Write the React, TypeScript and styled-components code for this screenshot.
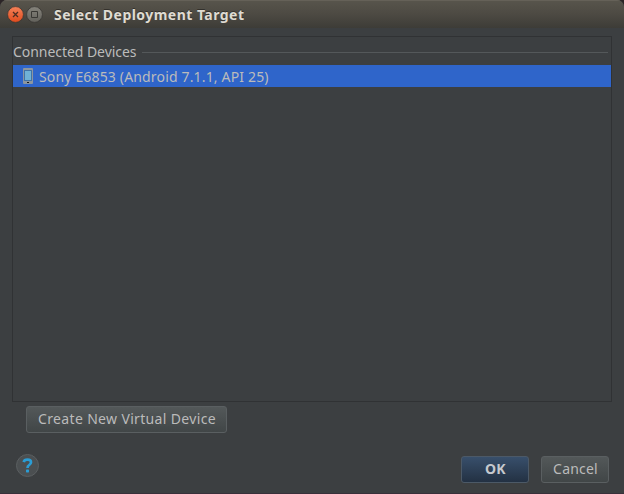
import React from "react";
import styled, { createGlobalStyle } from "styled-components";

const GlobalStyle = createGlobalStyle`
  * { box-sizing: border-box; }
  body { margin: 0; background: #2b2426; overflow: hidden; }
`;

const Dialog = styled.div`
  width: 624px;
  height: 494px;
  display: flex;
  flex-direction: column;
  overflow: hidden;
  border-radius: 7px 7px 0 0;
  border-bottom: 1px solid #38303a;
  background: #3c3f41;
  color: #bbbbbb;
  font-family: "Noto Sans", "Open Sans", sans-serif;
  font-size: 14px;
`;

const TitleBar = styled.header`
  flex: none;
  height: 28px;
  display: flex;
  align-items: center;
  padding: 1px 0 0 7px;
  background: linear-gradient(#58554c, #4d4a43 50%, #3d3c37);
  box-shadow: inset 0 1px #656158;
`;

const WindowButton = styled.span`
  display: flex;
  width: 17px;
  height: 17px;
  margin-right: 2px;
`;

const Label = styled.span<{ $spacing?: number }>`
  letter-spacing: ${(p) => p.$spacing ?? 0}px;
  line-height: 20px;
  white-space: nowrap;
`;

const Title = styled(Label)`
  margin-left: 9px;
  font-weight: 700;
  color: #dfdbd2;
  text-shadow: 0 -1px #33312c;
`;

const Body = styled.main`
  flex: 1;
  display: flex;
  flex-direction: column;
  padding: 8px 12px 0;
`;

const DeviceList = styled.section`
  height: 366px;
  border: 1px solid #303234;
`;

const GroupHeader = styled.div`
  height: 28px;
  display: flex;
  align-items: center;
  padding: 2px 3px 0 0;
`;

const Rule = styled.span`
  flex: 1;
  height: 1px;
  margin-left: 6px;
  background: #54585a;
`;

const DeviceRow = styled.div`
  height: 22px;
  display: flex;
  align-items: center;
  padding-left: 9px;
  gap: 5px;
  background: #2f65ca;
`;

const DeviceName = styled(Label)`
  padding-top: 2px;
`;

const Button = styled.button<{ $width: number; $primary?: boolean }>`
  width: ${(p) => p.$width}px;
  height: 27px;
  display: flex;
  align-items: center;
  justify-content: center;
  padding: 0 0 2px 1px;
  border: 1px solid ${(p) => (p.$primary ? "#4c5967" : "#5a5f61")};
  border-radius: 3px;
  background: ${(p) =>
    p.$primary ? "linear-gradient(#384f6b, #233143)" : "linear-gradient(#535859, #414647)"};
  color: ${(p) => (p.$primary ? "#c5c9ce" : "#bbbbbb")};
  font: ${(p) => (p.$primary ? 700 : 400)} 14px "Noto Sans", "Open Sans", sans-serif;
`;

const ListActions = styled.div`
  display: flex;
  padding: 4px 0 0 14px;
`;

const Footer = styled.footer`
  display: flex;
  align-items: center;
  gap: 12px;
  padding: 21px 3px 0 4px;
`;

const HelpButton = styled.span`
  display: flex;
  width: 24px;
  height: 24px;
  margin: 0 auto 7px 0;
`;

function CloseIcon() {
  return (
    <svg width="17" height="17" viewBox="0 0 17 17">
      <defs>
        <linearGradient id="close" x2="0" y2="1">
          <stop stopColor="#f58259" />
          <stop offset="1" stopColor="#df4b1d" />
        </linearGradient>
      </defs>
      <circle cx="8.5" cy="8.5" r="7.9" fill="url(#close)" stroke="#353430" strokeWidth=".7" />
      <path d="M6 6l5 5M11 6l-5 5" stroke="#4d2d22" strokeWidth="1.3" />
    </svg>
  );
}

function MaximizeIcon() {
  return (
    <svg width="17" height="17" viewBox="0 0 17 17">
      <defs>
        <linearGradient id="maximize" x2="0" y2="1">
          <stop stopColor="#86847c" />
          <stop offset="1" stopColor="#62615b" />
        </linearGradient>
      </defs>
      <circle cx="8.5" cy="8.5" r="7.9" fill="url(#maximize)" stroke="#353430" strokeWidth=".7" />
      <path d="M5.5 5.5h6v6h-6z" fill="none" stroke="#393834" />
    </svg>
  );
}

function PhoneIcon() {
  return (
    <svg width="12" height="16" viewBox="0 0 12 16">
      <rect x="1" width="10" height="16" rx="1" fill="#8d969f" />
      <rect x="2" y="2" width="8" height="11" fill="#4273a6" />
      <rect x="3" y="3" width="6" height="9" fill="#70b2d6" />
      <rect x="5" y="14" width="2" height="1" fill="#17191c" />
    </svg>
  );
}

function HelpIcon() {
  return (
    <svg width="24" height="24" viewBox="0 0 24 24">
      <circle cx="11.5" cy="11.5" r="11" fill="#4b4f51" stroke="#5b5f61" />
      <path d="M7.7 8.1Q8.2 5.7 11.5 5.7Q15 5.7 15 8.3Q15 9.8 13.2 11Q11.5 12.1 11.5 14" fill="none" stroke="#2b9dd5" strokeWidth="2.7" />
      <rect x="10" y="15.5" width="3" height="3" rx=".7" fill="#2b9dd5" />
    </svg>
  );
}

export default function App() {
  return (
    <>
      <GlobalStyle />
      <Dialog>
        <TitleBar>
          <WindowButton><CloseIcon /></WindowButton>
          <WindowButton><MaximizeIcon /></WindowButton>
          <Title $spacing={0.47}>Select Deployment Target</Title>
        </TitleBar>
        <Body>
          <DeviceList>
            <GroupHeader>
              <Label $spacing={-0.05}>Connected Devices</Label>
              <Rule />
            </GroupHeader>
            <DeviceRow>
              <PhoneIcon />
              <DeviceName $spacing={0.16}>Sony E6853 (Android 7.1.1, API 25)</DeviceName>
            </DeviceRow>
          </DeviceList>
          <ListActions>
            <Button $width={201}><Label $spacing={0.34}>Create New Virtual Device</Label></Button>
          </ListActions>
          <Footer>
            <HelpButton><HelpIcon /></HelpButton>
            <Button $width={68} $primary><Label $spacing={0.3}>OK</Label></Button>
            <Button $width={68}><Label $spacing={0.2}>Cancel</Label></Button>
          </Footer>
        </Body>
      </Dialog>
    </>
  );
}
